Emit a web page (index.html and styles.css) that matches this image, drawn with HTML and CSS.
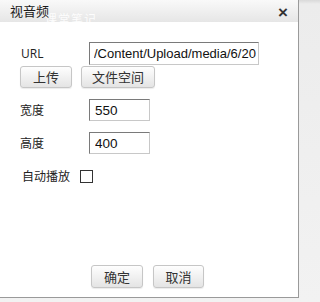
FILE: index.html
```html
<!DOCTYPE html>
<html lang="zh">
<head>
<meta charset="utf-8">
<link rel="stylesheet" href="styles.css">
</head>
<body>
<div class="dialog">
  <div class="titlebar">
    <span class="title">视音频</span>
    <span class="close">×</span>
    <span class="watermark">课堂笔记</span>
  </div>
  <div class="content">
    <div class="row row-url">
      <label class="label">URL</label>
      <input class="field field-url" type="text" value="/Content/Upload/media/6/20">
    </div>
    <div class="row row-buttons">
      <button class="btn btn-upload">上传</button>
      <button class="btn btn-space">文件空间</button>
    </div>
    <div class="row row-size">
      <label class="label">宽度</label>
      <input class="field field-num" type="text" value="550">
    </div>
    <div class="row row-size">
      <label class="label">高度</label>
      <input class="field field-num" type="text" value="400">
    </div>
    <div class="row row-check">
      <label class="label label-auto">自动播放</label>
      <span class="checkbox"></span>
    </div>
    <div class="footer">
      <button class="btn btn-ok">确定</button>
      <button class="btn btn-cancel">取消</button>
    </div>
  </div>
</div>
</body>
</html>
```
FILE: styles.css
```css
html, body {
  margin: 0;
  padding: 0;
}
body {
  width: 301px;
  height: 302px;
  overflow: hidden;
  background: linear-gradient(#d9d9d9, #ececec 4px, #f2f2f2);
  font-family: "Open Sans", "Noto Sans CJK SC", sans-serif;
  color: #222;
}
.dialog {
  width: 298px;
  height: 297px;
  background: #fff;
  border-right: 1px solid #9a9a9a;
  border-bottom: 1px solid #9a9a9a;
  display: flex;
  flex-direction: column;
}
.titlebar {
  position: relative;
  height: 22px;
  flex: none;
  display: flex;
  align-items: center;
  justify-content: space-between;
  padding: 0 10px 0 10px;
  background: linear-gradient(#f9f9f9, #e6e6e6);
}
.title {
  font-family: "Noto Sans CJK SC", sans-serif;
  font-size: 13px;
  line-height: 22px;
  color: #1a1a1a;
  position: relative;
  z-index: 1;
}
.close {
  font-family: "Liberation Sans", sans-serif;
  font-size: 17px;
  font-weight: bold;
  color: #333;
  line-height: 22px;
  margin-top: 4px;
}
.watermark {
  position: absolute;
  left: 45px;
  top: 10px;
  font-family: "Noto Sans CJK SC", sans-serif;
  font-size: 12px;
  color: #fff;
  opacity: 0.9;
  letter-spacing: 1px;
}
.content {
  flex: 1;
  display: flex;
  flex-direction: column;
  padding-left: 20px;
}
.row {
  display: flex;
  align-items: center;
}
.label {
  width: 69px;
  flex: none;
  font-size: 12px;
  color: #222;
}
.row-url {
  margin-top: 20px;
}
.row-url .label {
  padding-left: 1px;
  width: 68px;
}
.field {
  box-sizing: border-box;
  margin: 0;
  border: 1px solid #c8c8c8;
  border-top-color: #7a7a7a;
  border-left-color: #7a7a7a;
  font-family: "Liberation Sans", sans-serif;
  font-size: 13px;
  color: #111;
  padding: 0 5px;
  outline: none;
  background: #fff;
}
.field-url {
  width: 170px;
  height: 23px;
  padding-left: 4px;
  padding-right: 2px;
  font-size: 13px;
}
.field-num {
  width: 61px;
  height: 22px;
  font-size: 13.5px;
}
.row-buttons {
  margin-top: 1px;
  gap: 9px;
}
.btn {
  box-sizing: border-box;
  margin: 0;
  padding: 0;
  height: 22px;
  border: 1px solid #c6c6c6;
  border-radius: 3px;
  background: linear-gradient(#fefefe, #e4e4e4);
  box-shadow: 0 1px 1px rgba(0,0,0,0.08);
  font-family: "Noto Sans CJK SC", sans-serif;
  font-size: 13px;
  color: #333;
  line-height: 20px;
}
.btn-upload { width: 52px; }
.btn-space { width: 74px; }
.row-size {
  margin-top: 11px;
}
.row-check {
  margin-top: 13px;
}
.label-auto {
  width: auto;
  margin-left: 2px;
  margin-right: 10px;
}
.checkbox {
  box-sizing: border-box;
  width: 13px;
  height: 13px;
  border: 1px solid #333;
  background: #fff;
}
.footer {
  margin-top: auto;
  margin-left: -20px;
  padding-bottom: 9px;
  display: flex;
  justify-content: center;
  gap: 10px;
  padding-right: 3px;
}
.btn-ok { width: 52px; height: 23px; }
.btn-cancel { width: 51px; height: 23px; }
```
